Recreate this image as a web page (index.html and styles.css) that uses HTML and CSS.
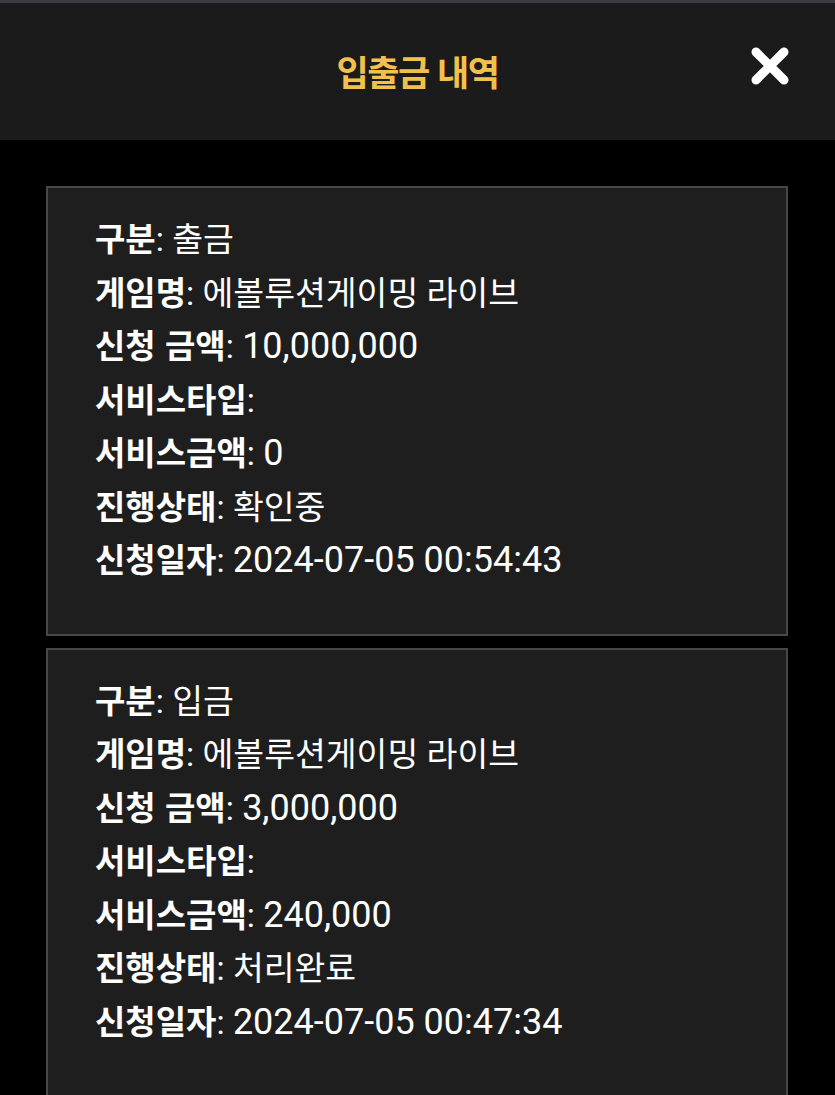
FILE: index.html
```html
<!DOCTYPE html>
<html lang="ko">
<head>
    <meta charset="UTF-8">
    <meta name="viewport" content="width=device-width, initial-scale=1.0">
    <title>입출금 내역</title>
    <link rel="stylesheet" href="styles.css">
</head>
<body>
    <div class="popup">
        <div class="pop_head">
            <span></span>
            <h1 class="pop_title">입출금 내역</h1>
            <button class="closeBtn" aria-label="닫기">
                <svg width="40" height="40" viewBox="0 0 40 40">
                    <path d="M6 6 L34 34 M34 6 L6 34" stroke="#fff" stroke-width="9" stroke-linecap="round"/>
                </svg>
            </button>
        </div>

        <div class="pop_body">
            <ul class="history">
                <li>
                    <p><b>구분</b>: 출금</p>
                    <p><b>게임명</b>: 에볼루션게이밍 라이브</p>
                    <p><b>신청 금액</b>: <span class="num">10,000,000</span></p>
                    <p><b>서비스타입</b>:</p>
                    <p><b>서비스금액</b>: <span class="num">0</span></p>
                    <p><b>진행상태</b>: 확인중</p>
                    <p><b>신청일자</b>: <span class="num">2024-07-05 00:54:43</span></p>
                </li>
                <li>
                    <p><b>구분</b>: 입금</p>
                    <p><b>게임명</b>: 에볼루션게이밍 라이브</p>
                    <p><b>신청 금액</b>: <span class="num">3,000,000</span></p>
                    <p><b>서비스타입</b>:</p>
                    <p><b>서비스금액</b>: <span class="num">240,000</span></p>
                    <p><b>진행상태</b>: 처리완료</p>
                    <p><b>신청일자</b>: <span class="num">2024-07-05 00:47:34</span></p>
                </li>
            </ul>
        </div>
    </div>
</body>
</html>
```

FILE: styles.css
```css
*{ margin: 0; padding: 0; box-sizing: border-box;}
ol,ul,li{ list-style: none;}
html, body{ background-color: #000;}
body{ font-family: Roboto, "Noto Sans CJK KR", sans-serif; color: #fff;}

.popup{ border-top: 3px solid #3b3b42;}

.pop_head{ height: 137px; background-color: #1b1b1b; display: grid; grid-template-columns: 1fr auto 1fr; align-items: center;}
.pop_head .pop_title{ font-family: "Noto Sans CJK KR", sans-serif; font-size: 35px; font-weight: 700; color: #f2c14b; letter-spacing: -1.5px; margin-bottom: 3px;}
.pop_head .closeBtn{ justify-self: end; margin: 0 45px 11px 0; width: 40px; height: 40px; border: none; background: none; cursor: pointer; display: flex;}

.pop_body{ padding: 46px 47px 0 46px;}
.history{ display: flex; flex-direction: column; gap: 12px;}
.history li{ background-color: #1e1e1e; border: 2px solid #474747; padding: 23px 20px 48px 47px;}
.history li p{ height: 53.5px; font-size: 33.5px; line-height: 53.5px; white-space: nowrap;}
.history li p b{ font-family: "Noto Sans CJK KR", sans-serif; font-weight: 700; font-size: 33px;}
.history li p .num{ font-size: 36px;}
```
